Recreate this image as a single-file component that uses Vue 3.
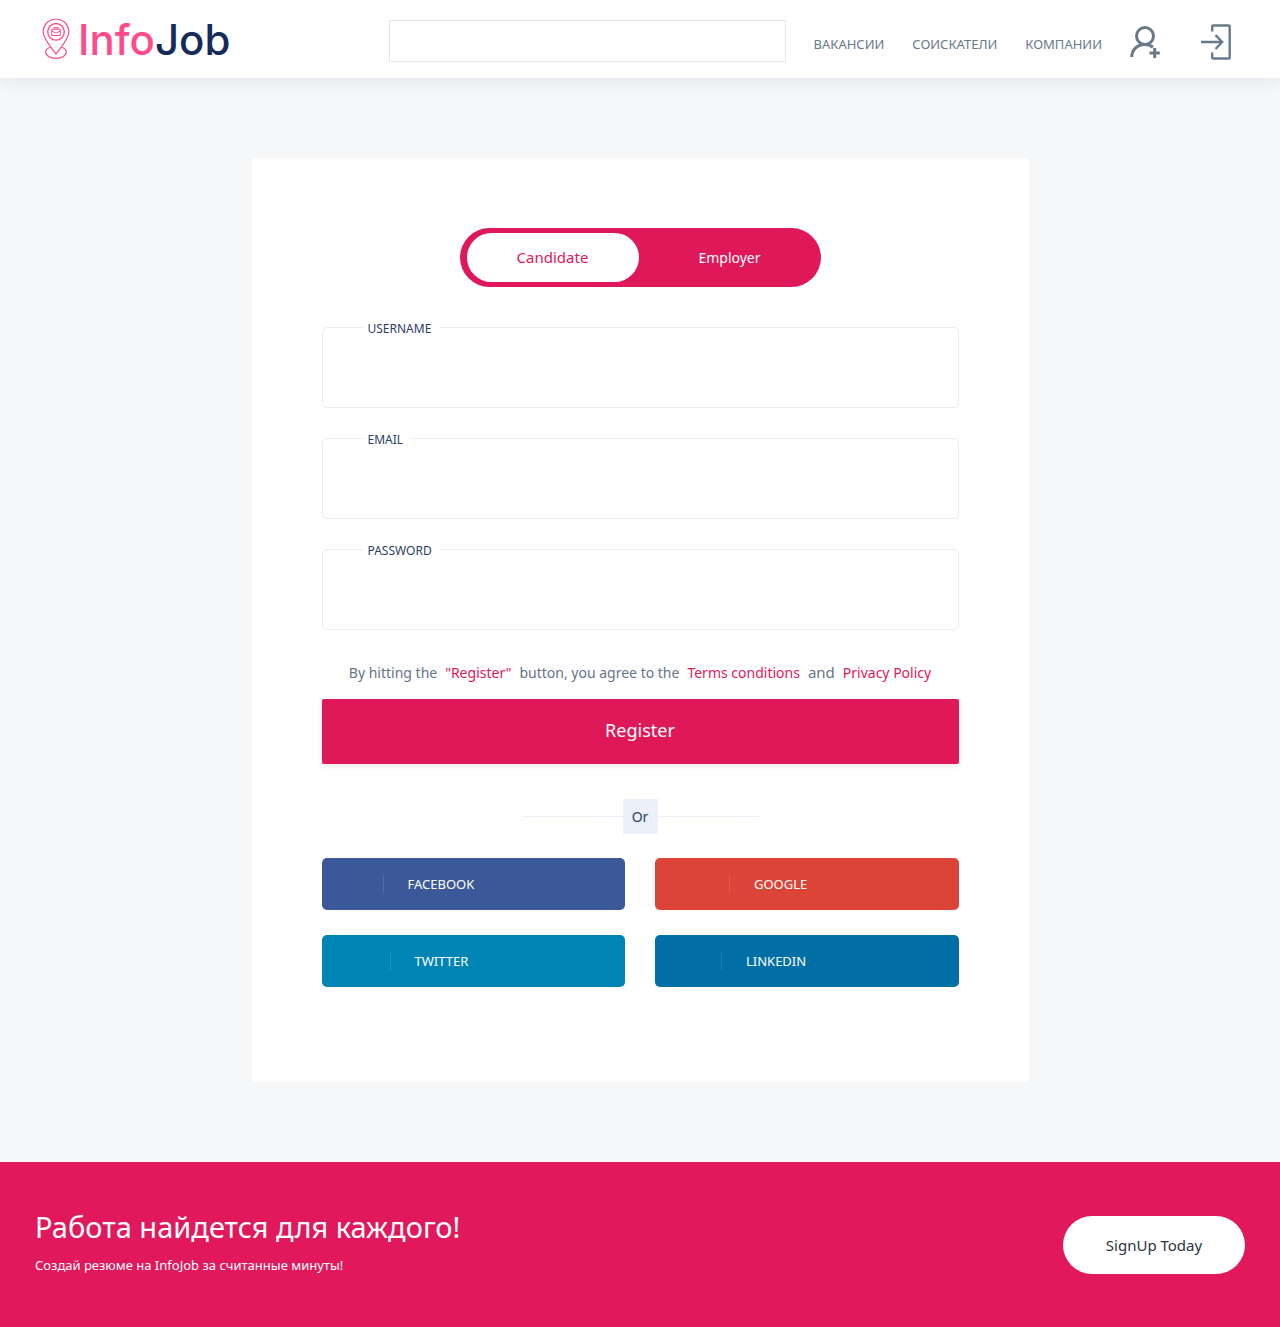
<script setup>
import { ref } from 'vue'

const role = ref('Candidate')
const roles = ['Candidate', 'Employer']
const links = ['ВАКАНСИИ', 'СОИСКАТЕЛИ', 'КОМПАНИИ']
const fields = [
  { id: 'username', label: 'USERNAME', type: 'text' },
  { id: 'email', label: 'EMAIL', type: 'email' },
  { id: 'password', label: 'PASSWORD', type: 'password' },
]
const socials = [
  { id: 'facebook', label: 'FACEBOOK' },
  { id: 'google', label: 'GOOGLE' },
  { id: 'twitter', label: 'TWITTER' },
  { id: 'linkedin', label: 'LINKEDIN' },
]
</script>

<template>
  <div class="page">
    <header class="header">
      <a class="logo" href="#">
        <svg class="logo-pin" viewBox="0 0 28 42" width="28" height="42" fill="none" stroke="#ff4b8b" stroke-width="1.2" stroke-linejoin="round">
          <path d="M14 36C9 29 1.200 21 1.200 13.800a12.800 12.800 0 0 1 25.600 0C26.800 21 19 29 14 36Z" />
          <circle cx="14" cy="13.800" r="8.300" stroke-width="1.400" />
          <path d="M9.700 11.200h8.600v6.300H9.700zM12 11.200V9.500h4v1.700M9.700 13l4.300 2 4.300-2" stroke-width="1" />
          <path d="M8.300 29.300C5.300 30.300 3.700 32 3.700 34c0 3.700 4.500 6.400 10.300 6.400S24.300 37.700 24.300 34c0-2-1.600-3.700-4.600-4.700" />
        </svg>
        <span class="logo-text"><span class="logo-info">Info</span>Job</span>
      </a>
      <input class="search" type="search" aria-label="Поиск" />
      <nav class="nav">
        <a v-for="link in links" :key="link" href="#">{{ link }}</a>
      </nav>
      <div class="actions">
        <a href="#" aria-label="Регистрация">
          <svg viewBox="0 0 30 36" width="30" height="36" fill="none" stroke="#677a89" stroke-width="3">
            <circle cx="15" cy="12" r="8.500" />
            <path d="M1.700 33C2 25.500 7.500 20.500 14.500 20.500c3.500 0 6 .8 8.500 2.700M24.700 24v10M19.500 29h10.300" />
          </svg>
        </a>
        <a href="#" aria-label="Вход">
          <svg viewBox="0 0 30 36" width="30" height="36" fill="none" stroke="#677a89" stroke-width="2.400">
            <path d="M11.200 7.500V2.500q0-1 1-1h15.500q1 0 1 1v31q0 1-1 1H12.200q-1 0-1-1v-5M0 18h21M14.500 11l6.700 7-6.700 7" />
          </svg>
        </a>
      </div>
    </header>

    <main class="main">
      <form class="card" @submit.prevent>
        <div class="toggle">
          <button
            v-for="item in roles"
            :key="item"
            type="button"
            :class="{ active: role === item }"
            :aria-pressed="role === item"
            @click="role = item"
          >{{ item }}</button>
        </div>

        <div v-for="field in fields" :key="field.id" class="field">
          <label :for="field.id">{{ field.label }}</label>
          <input :id="field.id" :type="field.type" />
        </div>

        <p class="terms">
          <span>By hitting the</span>
          <a href="#">"Register"</a>
          <span>button, you agree to the</span>
          <a href="#">Terms conditions</a>
          <span class="and">and</span>
          <a href="#">Privacy Policy</a>
        </p>
        <button class="submit" type="submit">Register</button>

        <div class="divider"><span>Or</span></div>

        <div class="socials">
          <button v-for="s in socials" :key="s.id" type="button" :class="s.id">{{ s.label }}</button>
        </div>
      </form>
    </main>

    <footer class="footer">
      <div class="footer-text">
        <h2>Работа найдется для каждого!</h2>
        <p>Создай резюме на InfoJob за считанные минуты!</p>
      </div>
      <button type="button">SignUp Today</button>
    </footer>
  </div>
</template>

<style>
body {
  margin: 0;
  background: #f5f7f9;
}
</style>

<style scoped>
* {
  box-sizing: border-box;
}
.page {
  font-family: "Noto Sans", sans-serif;
  font-size: 14px;
  color: #64748b;
}
a {
  text-decoration: none;
  color: inherit;
}
button,
input {
  font-family: inherit;
}
button {
  border: 0;
  cursor: pointer;
}
.header {
  display: flex;
  align-items: center;
  height: 78px;
  padding: 0 49px 0 42px;
  background: #fff;
  box-shadow: 0 0 20px rgba(62, 28, 90, 0.1);
}
.logo {
  display: flex;
  align-items: center;
  flex: 0 0 347px;
  gap: 8px;
}
.logo-text {
  padding-top: 2px;
  font: 500 42px/56px Inter, sans-serif;
  color: #152c5b;
}
.logo-info {
  color: #ff4b8b;
}
.search {
  flex: 1;
  min-width: 0;
  height: 42px;
  margin-top: 4px;
  padding: 0 12px;
  border: 1px solid #e2e8f1;
  background: #fff;
  font-size: 14px;
}
.nav {
  display: flex;
  gap: 28px;
  margin: 10px 28px 0;
  font-size: 13px;
  color: #677a89;
}
.actions {
  display: flex;
  gap: 41px;
  margin-top: 6px;
}
.actions svg {
  display: block;
}
.main {
  padding: 80px 20px;
}
.card {
  max-width: 777px;
  margin: 0 auto;
  padding: 70px 70px 95px;
  border-radius: 4px;
  background: #fff;
}
.toggle {
  display: flex;
  width: 361px;
  margin: 0 auto 40px;
  padding: 5px 0 5px 7px;
  border-radius: 30px;
  background: #df1859;
}
.toggle button {
  flex: 1;
  height: 49px;
  border-radius: 25px;
  background: none;
  font-size: 14px;
  color: #fff;
}
.toggle .active {
  flex: 0 0 172px;
  padding-bottom: 3px;
  background: #fff;
  font-size: 15px;
  color: #df1859;
}
.field {
  position: relative;
  margin-bottom: 30px;
}
.field label {
  position: absolute;
  top: -8px;
  left: 41px;
  padding: 0 8px 0 5px;
  background: #fff;
  font-size: 12px;
  line-height: 20px;
  color: #2b4066;
}
.field input {
  display: block;
  width: 100%;
  height: 81px;
  padding: 0 45px;
  border: 1px solid #ececec;
  border-radius: 5px;
  background: #fff;
  font-size: 14px;
}
.terms {
  display: flex;
  flex-wrap: wrap;
  align-items: baseline;
  justify-content: center;
  column-gap: 8px;
  margin: 0 0 14px;
  line-height: 24px;
}
.terms a {
  color: #df1859;
}
.terms .and {
  font-size: 15px;
}
.submit {
  display: block;
  width: 100%;
  height: 65px;
  padding-bottom: 4px;
  border-radius: 2px;
  background: #df1859;
  box-shadow: 0 2px 6px rgba(0, 0, 0, 0.1);
  font-size: 18px;
  color: #fff;
}
.divider {
  display: flex;
  align-items: center;
  width: 237px;
  margin: 35px auto 24px;
}
.divider::before,
.divider::after {
  content: "";
  flex: 1;
  height: 1px;
  background: #ecf0fa;
}
.divider span {
  width: 35px;
  background: #ecf0fa;
  text-align: center;
  line-height: 35px;
  color: #2b4066;
}
.socials {
  display: grid;
  grid-template-columns: 1fr 1fr;
  gap: 25px 30px;
}
.socials button {
  display: flex;
  align-items: center;
  gap: 24px;
  height: 52px;
  border-radius: 5px;
  font-size: 13px;
  color: #fff;
}
.socials button::before {
  content: "";
  width: 1px;
  height: 18px;
  background: rgba(255, 255, 255, 0.12);
}
.facebook {
  padding: 0 0 0 61px;
  background: #3b5998;
}
.google {
  padding: 0 0 0 74px;
  background: #dd4438;
}
.twitter {
  padding: 0 0 0 68px;
  background: #0084b4;
}
.linkedin {
  padding: 0 0 0 66px;
  background: #006fa6;
}
.footer {
  display: flex;
  align-items: center;
  justify-content: space-between;
  min-height: 165px;
  padding: 40px 35px;
  background: #e1185b;
  color: #fff;
}
.footer-text {
  padding-bottom: 8px;
}
.footer h2 {
  margin: 0 0 8px;
  font-size: 29px;
  font-weight: 400;
  line-height: 40px;
}
.footer p {
  margin: 0;
  font-size: 13px;
  line-height: 20px;
}
.footer button {
  width: 182px;
  height: 58px;
  border-radius: 30px;
  background: #fff;
  font-size: 15px;
  color: #2c3543;
}
</style>
